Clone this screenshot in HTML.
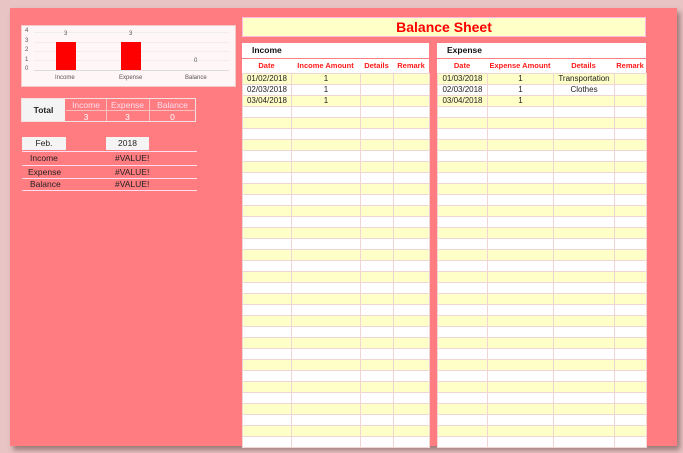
<!DOCTYPE html>
<html><head><meta charset="utf-8"><style>
*{margin:0;padding:0;box-sizing:border-box}
body{width:683px;height:453px;background:#e9c4c4;position:relative;overflow:hidden;font-family:"Liberation Sans",sans-serif;}
.a{position:absolute}
#panel{left:10px;top:8px;width:667px;height:438px;background:#ff7c80;box-shadow:3px 4px 5px rgba(90,60,60,.55)}
.t{font-size:8.5px;color:#222;white-space:nowrap}
table{border-collapse:collapse;table-layout:fixed;position:absolute}
td{border:1px solid #f1d5d5;height:11px;font-size:8px;line-height:10px;color:#222;text-align:center;padding:0;white-space:nowrap;overflow:hidden}
tr:nth-child(odd) td{background:#ffffc8}
tr:nth-child(even) td{background:#fff}
.h{background:#fff;font-size:8.5px;font-weight:bold;color:#111;padding-left:10px;line-height:15px}
.ch{background:#fff;color:#ff1a1a;font-weight:bold;font-size:7.5px;display:flex;line-height:14px}
.ch div{text-align:center}
</style></head><body>
<div id="panel" class="a"></div>
<div class="a" style="left:21px;top:25px;width:215px;height:62px;background:#fff7f7;border:1px solid #f6c9c9"></div>
<div class="a" style="left:34px;top:32px;width:195px;height:1px;background:#eee"></div>
<div class="a" style="left:34px;top:42px;width:195px;height:1px;background:#eee"></div>
<div class="a" style="left:34px;top:51px;width:195px;height:1px;background:#eee"></div>
<div class="a" style="left:34px;top:60px;width:195px;height:1px;background:#eee"></div>
<div class="a" style="left:34px;top:70px;width:195px;height:1px;background:#ddd"></div>
<div class="a t" style="left:25px;top:27px;font-size:6px;color:#555;line-height:9.5px">4<br>3<br>2<br>1<br>0</div>
<div class="a" style="left:56px;top:42px;width:20px;height:28px;background:#f00"></div>
<div class="a" style="left:121px;top:42px;width:20px;height:28px;background:#f00"></div>
<div class="a t" style="left:64px;top:31px;font-size:6px;color:#555">3</div>
<div class="a t" style="left:129px;top:31px;font-size:6px;color:#555">3</div>
<div class="a t" style="left:194px;top:58px;font-size:6px;color:#555">0</div>
<div class="a t" style="left:55px;top:75px;font-size:6px;color:#555">Income</div>
<div class="a t" style="left:119px;top:75px;font-size:6px;color:#555">Expense</div>
<div class="a t" style="left:185px;top:75px;font-size:6px;color:#555">Balance</div>
<div class="a" style="left:21px;top:98px;width:175px;height:24px;border:1px solid #f4e0e0"></div>
<div class="a" style="left:22px;top:99px;width:43px;height:22px;background:#f4f4f4;font-size:8.5px;font-weight:bold;text-align:center;line-height:22px;color:#222">Total</div>
<div class="a" style="left:106px;top:99px;width:1px;height:22px;background:#f4c0c0"></div>
<div class="a" style="left:149px;top:99px;width:1px;height:22px;background:#f4c0c0"></div>
<div class="a" style="left:66px;top:110px;width:130px;height:1px;background:#f4c0c0"></div>
<div class="a t" style="left:66px;top:100px;width:40px;text-align:center;color:#fde;font-size:8.5px">Income</div>
<div class="a t" style="left:106px;top:100px;width:43px;text-align:center;color:#fde;font-size:8.5px">Expense</div>
<div class="a t" style="left:149px;top:100px;width:47px;text-align:center;color:#fde;font-size:8.5px">Balance</div>
<div class="a t" style="left:66px;top:112px;width:40px;text-align:center;color:#fff">3</div>
<div class="a t" style="left:106px;top:112px;width:43px;text-align:center;color:#fff">3</div>
<div class="a t" style="left:149px;top:112px;width:47px;text-align:center;color:#fff">0</div>
<div class="a t" style="left:22px;top:137px;width:44px;height:13px;background:#f4f4f4;text-align:center;line-height:13px">Feb.</div>
<div class="a t" style="left:106px;top:137px;width:43px;height:13px;background:#f4f4f4;text-align:center;line-height:13px">2018</div>
<div class="a" style="left:22px;top:151px;width:175px;height:1px;background:#fde"></div>
<div class="a" style="left:22px;top:165px;width:175px;height:1px;background:#fde"></div>
<div class="a" style="left:22px;top:178px;width:175px;height:1px;background:#fde"></div>
<div class="a" style="left:22px;top:190px;width:175px;height:1px;background:#fde"></div>
<div class="a t" style="left:30px;top:153px">Income</div>
<div class="a t" style="left:28px;top:167px">Expense</div>
<div class="a t" style="left:30px;top:179px">Balance</div>
<div class="a t" style="left:115px;top:153px">#VALUE!</div>
<div class="a t" style="left:115px;top:167px">#VALUE!</div>
<div class="a t" style="left:115px;top:179px">#VALUE!</div>
<div class="a" style="left:242px;top:17px;width:404px;height:20px;background:#ffffc8;border:1px solid #fbd;color:#f00;font-weight:bold;font-size:14px;text-align:center;line-height:19px">Balance Sheet</div>
<div class="a h" style="left:242px;top:43px;width:187px;height:15px">Income</div>
<div class="a ch" style="left:242px;top:59px;width:187px;height:14px"><div style="width:49px">Date</div><div style="width:69px">Income Amount</div><div style="width:33px">Details</div><div style="width:36px">Remark</div></div>
<table id="ti" style="left:242px;top:73px;width:187px"><colgroup><col style="width:49px"><col style="width:69px"><col style="width:33px"><col style="width:36px"></colgroup></table>
<div class="a h" style="left:437px;top:43px;width:209px;height:15px">Expense</div>
<div class="a ch" style="left:437px;top:59px;width:209px;height:14px"><div style="width:50px">Date</div><div style="width:66px">Expense Amount</div><div style="width:61px">Details</div><div style="width:32px">Remark</div></div>
<table id="te" style="left:437px;top:73px;width:209px"><colgroup><col style="width:50px"><col style="width:66px"><col style="width:61px"><col style="width:32px"></colgroup></table>
<script>
function fill(id,data){var t=document.getElementById(id),h='';for(var i=0;i<34;i++){var r=data[i]||['','','',''];h+='<tr><td>'+r[0]+'</td><td>'+r[1]+'</td><td>'+r[2]+'</td><td>'+r[3]+'</td></tr>';}t.innerHTML+=h;}
fill('ti',[['01/02/2018','1','',''],['02/03/2018','1','',''],['03/04/2018','1','','']]);
fill('te',[['01/03/2018','1','Transportation',''],['02/03/2018','1','Clothes',''],['03/04/2018','1','','']]);
</script>
</body></html>
